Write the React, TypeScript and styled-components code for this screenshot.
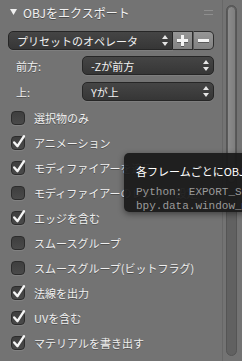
import styled, { createGlobalStyle } from "styled-components";

const GlobalStyle = createGlobalStyle`
  html, body {
    margin: 0;
    padding: 0;
    background: #737373;
  }
  body {
    font-family: "Noto Sans CJK JP", "DejaVu Sans", sans-serif;
  }
`;

const checks = [
  { label: "選択物のみ", on: false },
  { label: "アニメーション", on: true },
  { label: "モディファイアーを適用", on: true },
  { label: "モディファイアーのレンダー設定", on: false },
  { label: "エッジを含む", on: true },
  { label: "スムースグループ", on: false },
  { label: "スムースグループ(ビットフラグ)", on: false },
  { label: "法線を出力", on: true },
  { label: "UVを含む", on: true },
  { label: "マテリアルを書き出す", on: true },
  { label: "三角面化", on: false },
];

const UpDown = () => (
  <svg width="6" height="11" viewBox="0 0 6 11">
    <polygon points="0,4 6,4 3,0" fill="#e6e6e6" />
    <polygon points="0,7 6,7 3,11" fill="#e6e6e6" />
  </svg>
);

const App = () => {
  return (
    <>
      <GlobalStyle />
      <Page>
        <Panel>
          <Header>
            <svg width="7" height="6" viewBox="0 0 7 6">
              <polygon points="0,0 7,0 3.5,6" fill="#f0f0f0" />
            </svg>
            <HeaderTitle>OBJをエクスポート</HeaderTitle>
            <Grip />
          </Header>

          <PresetRow>
            <Menu $joined>
              <MenuText>プリセットのオペレータ</MenuText>
              <UpDown />
            </Menu>
            <ToolButton>
              <svg width="11" height="11" viewBox="0 0 11 11">
                <rect x="4" y="0" width="3" height="11" fill="#f4f4f4" />
                <rect x="0" y="4" width="11" height="3" fill="#f4f4f4" />
              </svg>
            </ToolButton>
            <ToolButton $last>
              <svg width="11" height="3" viewBox="0 0 11 3">
                <rect x="0" y="0" width="11" height="3" fill="#f4f4f4" />
              </svg>
            </ToolButton>
          </PresetRow>

          <FieldRow>
            <FieldLabel>前方:</FieldLabel>
            <Menu>
              <MenuText>-Zが前方</MenuText>
              <UpDown />
            </Menu>
          </FieldRow>
          <FieldRow>
            <FieldLabel>上:</FieldLabel>
            <Menu>
              <MenuText>Yが上</MenuText>
              <UpDown />
            </Menu>
          </FieldRow>

          <CheckList>
            {checks.map((c) => (
              <CheckRow key={c.label}>
                <Box>
                  {c.on && (
                    <svg width="14" height="14" viewBox="0 0 14 14">
                      <polyline
                        points="3.2,6.5 6.5,10.2 13,0.2"
                        fill="none"
                        stroke="#f6f6f6"
                        strokeWidth="2.4"
                        strokeLinecap="round"
                        strokeLinejoin="round"
                      />
                    </svg>
                  )}
                </Box>
                <CheckLabel>{c.label}</CheckLabel>
              </CheckRow>
            ))}
          </CheckList>
        </Panel>

        <Gutter>
          <Track>
            <Thumb />
          </Track>
        </Gutter>

        <Tooltip>
          <TipTitle>各フレームごとにOBJファイルを書き出す</TipTitle>
          <TipCode>Python: EXPORT_SCENE_OT_obj.use_animation</TipCode>
          <TipCode>bpy.data.window_managers["WinMan"]</TipCode>
        </Tooltip>
      </Page>
    </>
  );
};

const Page = styled.div`
  position: relative;
  display: flex;
  width: 242px;
  height: 361px;
  overflow: hidden;
  background: #737373;
`;

const Panel = styled.div`
  width: 222px;
  flex-shrink: 0;
  display: flex;
  flex-direction: column;
  border-right: 1px solid #676767;
  overflow: hidden;
  & > * {
    flex-shrink: 0;
  }
`;

const Header = styled.div`
  height: 24px;
  display: flex;
  align-items: center;
  padding: 0 9px 0 10px;
  gap: 6px;
`;

const HeaderTitle = styled.span`
  flex: 1;
  font-size: 12px;
  color: #f2f2f2;
  text-shadow: 0 1px 0 rgba(0, 0, 0, 0.35);
`;

const Grip = styled.div`
  width: 9px;
  height: 3px;
  border-top: 1px solid #8e8e8e;
  border-bottom: 1px solid #8e8e8e;
`;

const PresetRow = styled.div`
  display: flex;
  height: 19px;
  margin: 7px 0 0 8px;
  width: 206px;
`;

const Menu = styled.div<{ $joined?: boolean }>`
  flex: 1;
  display: flex;
  align-items: center;
  justify-content: space-between;
  padding: 0 4px 0 8px;
  background: linear-gradient(#454545, #363636);
  border: 1px solid #262626;
  border-radius: ${(p) => (p.$joined ? "5px 0 0 5px" : "5px")};
  box-shadow: 0 1px 0 rgba(255, 255, 255, 0.08);
`;

const MenuText = styled.span`
  font-size: 11px;
  color: #f0f0f0;
  white-space: nowrap;
`;

const ToolButton = styled.div<{ $last?: boolean }>`
  width: 19px;
  display: flex;
  align-items: center;
  justify-content: center;
  background: linear-gradient(#969696, #828282);
  border: 1px solid #2e2e2e;
  border-left: ${(p) => (p.$last ? "1px solid #5a5a5a" : "none")};
  border-radius: ${(p) => (p.$last ? "0 5px 5px 0" : "0")};
  svg {
    filter: drop-shadow(0 1px 0 rgba(0, 0, 0, 0.35));
  }
`;

const FieldRow = styled.div`
  display: grid;
  grid-template-columns: 74px 132px;
  height: 19px;
  margin: 6px 0 0 8px;
  & + & {
    margin-top: 7px;
  }
`;

const FieldLabel = styled.span`
  align-self: center;
  padding-left: 8px;
  font-size: 11px;
  color: #f0f0f0;
  text-shadow: 0 1px 0 rgba(0, 0, 0, 0.3);
`;

const CheckList = styled.div`
  display: flex;
  flex-direction: column;
  margin-top: 4px;
`;

const CheckRow = styled.div`
  height: 25px;
  flex-shrink: 0;
  display: flex;
  align-items: center;
  gap: 9px;
  padding-left: 11px;
`;

const Box = styled.div`
  width: 14px;
  height: 14px;
  box-sizing: border-box;
  border-radius: 4px;
  background: linear-gradient(#3e3e3e, #4a4a4a);
  border: 1px solid #2c2c2c;
  box-shadow: 0 1px 0 rgba(255, 255, 255, 0.1);
  svg {
    display: block;
    overflow: visible;
    margin: -1px 0 0 -1px;
  }
`;

const CheckLabel = styled.span`
  font-size: 11px;
  color: #f0f0f0;
  white-space: nowrap;
  text-shadow: 0 1px 0 rgba(0, 0, 0, 0.3);
`;

const Gutter = styled.div`
  flex: 1;
  display: flex;
  padding: 5px 5px 5px 3px;
`;

const Track = styled.div`
  flex: 1;
  display: flex;
  flex-direction: column;
  border-radius: 6px;
  background: #616161;
  border: 1px solid #555;
  overflow: hidden;
`;

const Thumb = styled.div`
  height: 175px;
  border-radius: 6px;
  background: linear-gradient(90deg, #8c8c8c, #7e7e7e);
  border: 1px solid #5a5a5a;
`;

const Tooltip = styled.div`
  position: absolute;
  left: 124px;
  top: 153px;
  width: 210px;
  height: 59px;
  box-sizing: border-box;
  padding: 10px 0 0 12px;
  background: rgba(26, 26, 26, 0.94);
  border-radius: 5px;
  box-shadow: 0 2px 6px rgba(0, 0, 0, 0.45);
  display: flex;
  flex-direction: column;
  white-space: nowrap;
`;

const TipTitle = styled.div`
  font-size: 11px;
  line-height: 16px;
  color: #ffffff;
  margin-bottom: 6px;
`;

const TipCode = styled.div`
  font-family: "Liberation Mono", "DejaVu Sans Mono", monospace;
  font-size: 11px;
  line-height: 14px;
  color: #9a9a9a;
`;

export default App;
